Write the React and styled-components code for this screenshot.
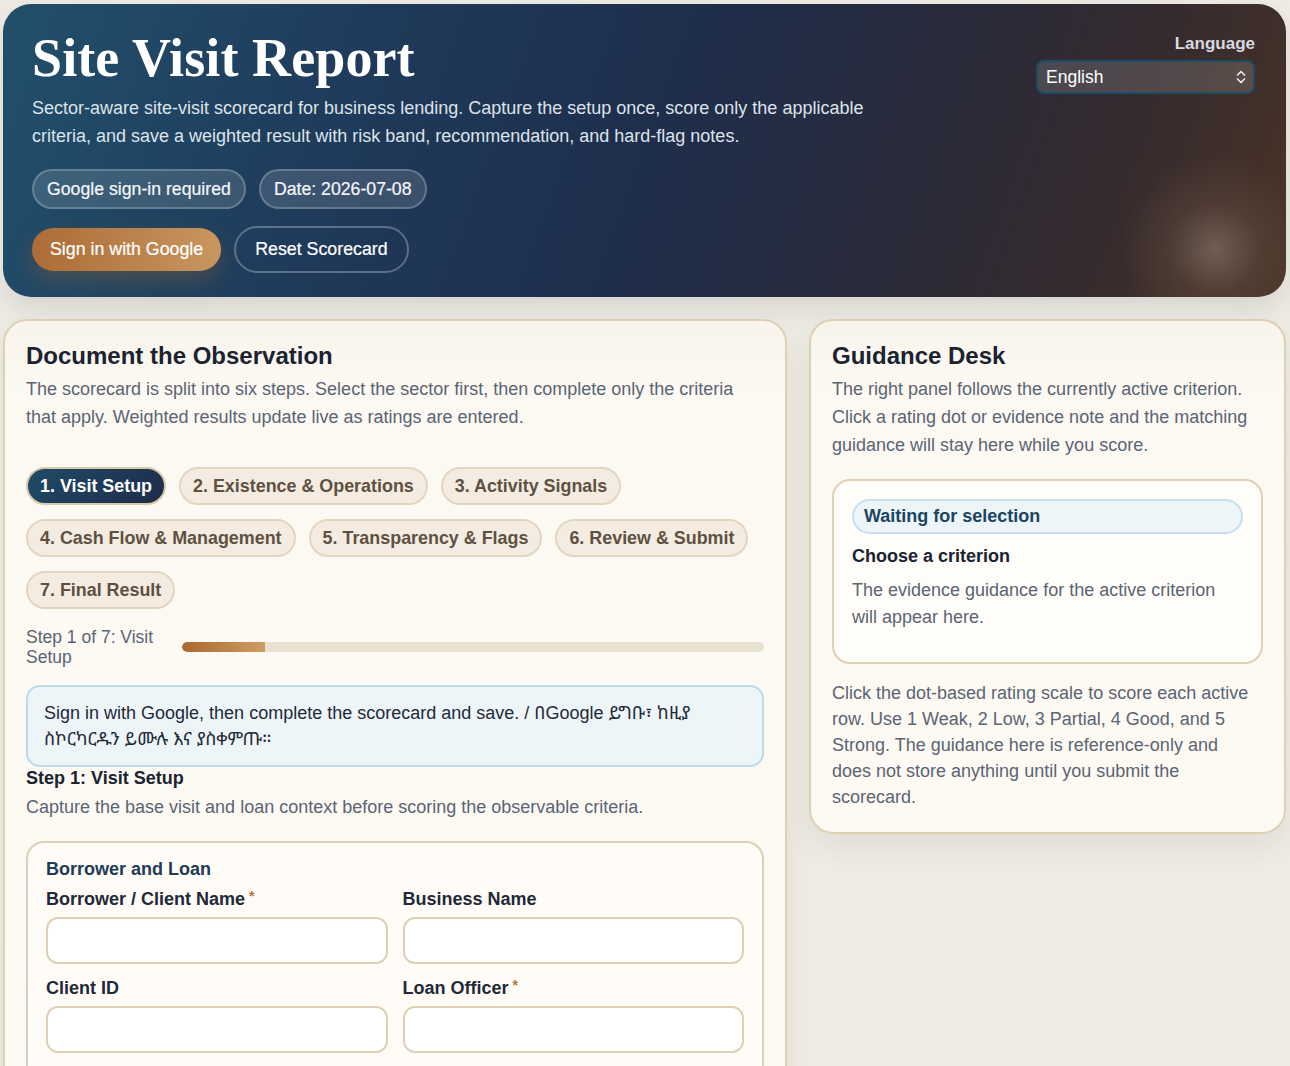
import React from "react";
import styled, { createGlobalStyle } from "styled-components";

const GlobalStyle = createGlobalStyle`
  *, *::before, *::after { box-sizing: border-box; }
  html, body { margin: 0; padding: 0; }
  body {
    background: #efece5;
    font-family: "Liberation Sans", Arial, "Noto Sans Ethiopic", "Abyssinica SIL", "DejaVu Sans", sans-serif;
    font-size: 18px;
    color: #1b2330;
  }
`;

const Page = styled.div`
  padding: 4px 4px 0 3px;
  display: flex;
  flex-direction: column;
  gap: 22px;
`;

const Hero = styled.header`
  border-radius: 28px;
  padding: 25px 31px 24px 29px;
  display: flex;
  justify-content: space-between;
  align-items: flex-start;
  color: #ffffff;
  background:
    radial-gradient(circle at 1212px 245px, rgba(150, 132, 118, 0.55) 0px, rgba(110, 88, 74, 0.3) 45px, rgba(80, 60, 48, 0) 95px),
    linear-gradient(110deg, #21506b 0%, #1f3a5a 28%, #1e2e4c 50%, #282b3c 68%, #342a2e 84%, #4a3426 100%);
  box-shadow: 0 12px 28px rgba(40, 45, 60, 0.12);
`;

const HeroMain = styled.div`
  flex: 1;
  min-width: 0;
`;

const Title = styled.h1`
  margin: 0;
  font-family: "Liberation Serif", "Times New Roman", serif;
  font-weight: 700;
  font-size: 54px;
  line-height: 58px;
  letter-spacing: 0.1px;
`;

const Subtitle = styled.p`
  margin: 7px 0 0;
  max-width: 860px;
  font-size: 18px;
  line-height: 28px;
  color: #dde3ea;
`;

const ChipRow = styled.div`
  display: flex;
  gap: 13px;
  margin-top: ${(p) => p.$top}px;
  align-items: center;
`;

const Chip = styled.span`
  display: inline-flex;
  align-items: center;
  height: 40px;
  padding: 0 13px;
  border-radius: 999px;
  border: 2px solid rgba(255, 255, 255, 0.22);
  background: rgba(255, 255, 255, 0.13);
  font-size: 17.7px;
  color: #f5f7fa;
  -webkit-text-stroke: 0.2px #f5f7fa;
`;

const PrimaryButton = styled.button`
  height: 43px;
  padding: 0 18px;
  border: none;
  border-radius: 999px;
  background: linear-gradient(90deg, #ad6c35 0%, #c89660 100%);
  color: #ffffff;
  font-family: inherit;
  font-size: 17.8px;
  -webkit-text-stroke: 0.2px #ffffff;
  box-shadow: 0 10px 22px rgba(150, 100, 55, 0.35);
`;

const GhostButton = styled.button`
  height: 47px;
  padding: 0 19px;
  border: 2px solid rgba(255, 255, 255, 0.28);
  border-radius: 999px;
  background: transparent;
  color: #ffffff;
  font-family: inherit;
  font-size: 17.8px;
  -webkit-text-stroke: 0.2px #ffffff;
`;

const LangBlock = styled.div`
  display: flex;
  flex-direction: column;
  align-items: flex-end;
  gap: 6px;
  padding-top: 5px;
`;

const LangLabel = styled.label`
  font-size: 17px;
  font-weight: 700;
  line-height: 20px;
  color: #d6dae0;
`;

const SelectBox = styled.div`
  width: 219px;
  height: 34px;
  border: 2px solid #1d4c66;
  border-radius: 8px;
  background: rgba(255, 255, 255, 0.14);
  display: flex;
  align-items: center;
  justify-content: space-between;
  padding: 0 6px 0 8px;
  font-size: 17.5px;
  color: #ffffff;
`;

const Columns = styled.main`
  display: grid;
  grid-template-columns: minmax(0, 1fr) 477px;
  gap: 22px;
  align-items: start;
`;

const Panel = styled.section`
  border: 2px solid #ddd0b4;
  border-radius: 24px;
  padding: 20px 21px 22px;
  background: linear-gradient(180deg, #f8f4ec 0%, #fcf9f3 70px, #fdfaf4 100%);
  box-shadow: 0 14px 30px rgba(70, 55, 25, 0.08);
`;

const PanelTitle = styled.h2`
  margin: 0;
  font-size: 24px;
  line-height: 29px;
  font-weight: 700;
  color: #1b2330;
`;

const Lead = styled.p`
  margin: 5px 0 0;
  font-size: 18px;
  line-height: 28px;
  color: #5b6472;
`;

const StepTabs = styled.nav`
  margin-top: 36px;
  display: flex;
  flex-wrap: wrap;
  gap: 14px 13px;
`;

const StepTab = styled.button`
  height: 38px;
  padding: 0 12px;
  border-radius: 999px;
  border: 2px solid ${(p) => (p.$active ? "#d9c9a9" : "#e2d6c0")};
  background: ${(p) =>
    p.$active ? "linear-gradient(135deg, #1f4b67 0%, #1e2c49 100%)" : "#f4ece0"};
  color: ${(p) => (p.$active ? "#ffffff" : "#5e5142")};
  font-family: inherit;
  font-size: 17.9px;
  font-weight: 700;
  white-space: nowrap;
`;

const ProgressRow = styled.div`
  margin-top: 18px;
  display: grid;
  grid-template-columns: 140px minmax(0, 1fr);
  gap: 16px;
  align-items: center;
`;

const ProgressLabel = styled.span`
  font-size: 17.5px;
  line-height: 20px;
  color: #5b6472;
`;

const Track = styled.div`
  height: 10px;
  border-radius: 5px;
  background: #e8e0d0;
  overflow: hidden;
`;

const Fill = styled.div`
  height: 100%;
  border-radius: 5px 0 0 5px;
  background: linear-gradient(90deg, #a8692f 0%, #cf9c66 100%);
`;

const Notice = styled.div`
  margin-top: 18px;
  padding: 13px 16px;
  border: 2px solid #bddaea;
  border-radius: 14px;
  background: #eef5f9;
  font-size: 18px;
  line-height: 26px;
  color: #1e2a38;
`;

const StepHeading = styled.h3`
  margin: 0;
  font-size: 18px;
  line-height: 22px;
  font-weight: 700;
  color: #1b2330;
`;

const StepDesc = styled.p`
  margin: 5px 0 0;
  font-size: 18px;
  line-height: 26px;
  color: #5b6472;
`;

const FieldCard = styled.fieldset`
  margin: 21px 0 0;
  padding: 15px 18px 24px;
  border: 2px solid #ddd0b4;
  border-radius: 18px;
  background: #fffcf7;
  min-width: 0;
`;

const CardTitle = styled.div`
  font-size: 18px;
  line-height: 22px;
  font-weight: 700;
  color: #213a56;
`;

const FieldGrid = styled.div`
  margin-top: 9px;
  display: grid;
  grid-template-columns: 1fr 1fr;
  gap: 14px 15px;
`;

const Field = styled.label`
  display: flex;
  flex-direction: column;
  gap: 8px;
`;

const FieldLabel = styled.span`
  display: block;
  height: 20px;
  font-size: 18px;
  line-height: 20px;
  font-weight: 700;
  color: #1f2937;
`;

const Required = styled.span`
  display: inline-block;
  line-height: 1;
  color: #b3763e;
  font-size: 14px;
  margin-left: 4px;
  transform: translateY(-4px);
`;

const Input = styled.input`
  height: 47px;
  width: 100%;
  border: 2px solid #ddd0b4;
  border-radius: 12px;
  background: #ffffff;
  font-family: inherit;
  font-size: 18px;
  padding: 0 12px;
  outline: none;
`;

const GuideCard = styled.div`
  margin-top: 20px;
  padding: 18px 18px 31px;
  border: 2px solid #ddd0b4;
  border-radius: 18px;
  background: #fffdf9;
`;

const StatusPill = styled.div`
  height: 35px;
  display: flex;
  align-items: center;
  padding: 0 10px;
  border: 2px solid #c8dfeb;
  border-radius: 999px;
  background: #edf5f9;
  font-size: 18px;
  font-weight: 700;
  color: #1c4560;
`;

const GuideTitle = styled.div`
  margin-top: 11px;
  font-size: 18px;
  line-height: 22px;
  font-weight: 700;
  color: #1b2330;
`;

const GuideText = styled.p`
  margin: 10px 0 0;
  font-size: 18px;
  line-height: 27px;
  color: #5b6472;
`;

const FootNote = styled.p`
  margin: 16px 0 0;
  max-width: 424px;
  font-size: 18px;
  line-height: 26px;
  color: #5b6472;
`;

const Chevrons = () => (
  <svg width="12" height="16" viewBox="0 0 12 16" fill="none" stroke="#e8e8ea" strokeWidth="1.7" strokeLinecap="round" strokeLinejoin="round">
    <path d="M2.5 6 L6 2.5 L9.5 6" />
    <path d="M2.5 10 L6 13.5 L9.5 10" />
  </svg>
);

const steps = [
  "1. Visit Setup",
  "2. Existence & Operations",
  "3. Activity Signals",
  "4. Cash Flow & Management",
  "5. Transparency & Flags",
  "6. Review & Submit",
  "7. Final Result",
];

const fields = [
  { label: "Borrower / Client Name", req: true },
  { label: "Business Name" },
  { label: "Client ID" },
  { label: "Loan Officer", req: true },
  { label: "Branch" },
  { label: "Loan Amount" },
];

export default function App() {
  const current = 1;
  return (
    <>
      <GlobalStyle />
      <Page>
        <Hero>
          <HeroMain>
            <Title>Site Visit Report</Title>
            <Subtitle>
              Sector-aware site-visit scorecard for business lending. Capture the setup once, score only the applicable
              criteria, and save a weighted result with risk band, recommendation, and hard-flag notes.
            </Subtitle>
            <ChipRow $top={19}>
              <Chip>Google sign-in required</Chip>
              <Chip>Date: 2026-07-08</Chip>
            </ChipRow>
            <ChipRow $top={17}>
              <PrimaryButton>Sign in with Google</PrimaryButton>
              <GhostButton>Reset Scorecard</GhostButton>
            </ChipRow>
          </HeroMain>
          <LangBlock>
            <LangLabel>Language</LangLabel>
            <SelectBox>
              <span>English</span>
              <Chevrons />
            </SelectBox>
          </LangBlock>
        </Hero>

        <Columns>
          <Panel>
            <PanelTitle>Document the Observation</PanelTitle>
            <Lead>
              The scorecard is split into six steps. Select the sector first, then complete only the criteria that
              apply. Weighted results update live as ratings are entered.
            </Lead>
            <StepTabs>
              {steps.map((s, i) => (
                <StepTab key={s} $active={i === 0}>
                  {s}
                </StepTab>
              ))}
            </StepTabs>
            <ProgressRow>
              <ProgressLabel>Step 1 of 7: Visit Setup</ProgressLabel>
              <Track>
                <Fill style={{ width: `${(current / steps.length) * 100}%` }} />
              </Track>
            </ProgressRow>
            <Notice>
              Sign in with Google, then complete the scorecard and save. / በGoogle ይግቡ፣ ከዚያ ስኮርካርዱን ይሙሉ እና ያስቀምጡ።
            </Notice>
            <StepHeading>Step 1: Visit Setup</StepHeading>
            <StepDesc>Capture the base visit and loan context before scoring the observable criteria.</StepDesc>
            <FieldCard>
              <CardTitle>Borrower and Loan</CardTitle>
              <FieldGrid>
                {fields.map((f) => (
                  <Field key={f.label}>
                    <FieldLabel>
                      {f.label}
                      {f.req && <Required>*</Required>}
                    </FieldLabel>
                    <Input type="text" />
                  </Field>
                ))}
              </FieldGrid>
            </FieldCard>
          </Panel>

          <Panel>
            <PanelTitle>Guidance Desk</PanelTitle>
            <Lead>
              The right panel follows the currently active criterion. Click a rating dot or evidence note and the
              matching guidance will stay here while you score.
            </Lead>
            <GuideCard>
              <StatusPill>Waiting for selection</StatusPill>
              <GuideTitle>Choose a criterion</GuideTitle>
              <GuideText>The evidence guidance for the active criterion will appear here.</GuideText>
            </GuideCard>
            <FootNote>
              Click the dot-based rating scale to score each active row. Use 1 Weak, 2 Low, 3 Partial, 4 Good, and 5
              Strong. The guidance here is reference-only and does not store anything until you submit the scorecard.
            </FootNote>
          </Panel>
        </Columns>
      </Page>
    </>
  );
}
